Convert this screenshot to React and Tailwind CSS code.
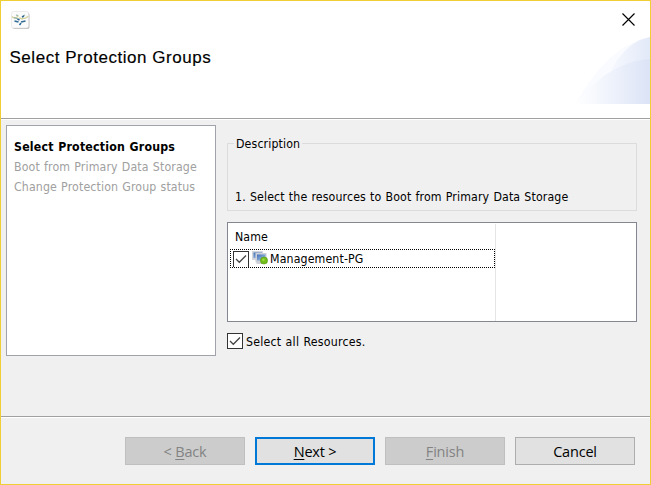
const TAHOMA =
  "font-['DejaVu_Sans_Condensed','DejaVu_Sans',sans-serif] [font-stretch:condensed] text-[12.25px] leading-5 tracking-[0.13px] [word-spacing:0.5px] whitespace-nowrap";

function AppIcon() {
  return (
    <svg width="19" height="19" viewBox="0 0 19 19" className="block">
      <rect x="1.5" y="1.5" width="17" height="16.5" rx="2.5" fill="#b9b9b9" />
      <rect x="0.5" y="0.5" width="17" height="16.5" rx="2" fill="#fbfbfc" stroke="#e4e4e4" strokeWidth="0.7" />
      <path d="M1 5.5 C3 8 6 7 7.5 4.5 M8 7 L12 8 M11 7 C13 8 16 7 17 5" fill="none" stroke="#d5d3a0" strokeWidth="1.4" />
      <path d="M3 6.5 L7 8 M5 4 L7 4.5 M12 5 L14 4" fill="none" stroke="#8fb0a8" strokeWidth="1.2" />
      <path d="M3.5 10 L7.5 11 M10 11 L14.5 10 M8.5 14 L10 12 M6.5 8 L8.5 9 M11 6 L13 5" fill="none" stroke="#2f6b94" strokeWidth="1.6" />
    </svg>
  );
}

function HeaderArt() {
  return (
    <svg width="74" height="67" viewBox="0 0 74 67" className="block">
      <defs>
        <linearGradient id="low" x1="0" x2="1">
          <stop offset="0" stopColor="#ffffff" />
          <stop offset="0.5" stopColor="#eef2fb" />
          <stop offset="1" stopColor="#dbe3f6" />
        </linearGradient>
        <linearGradient id="mid" x1="0" x2="1">
          <stop offset="0" stopColor="#f7f9fe" />
          <stop offset="1" stopColor="#e2e9f8" />
        </linearGradient>
      </defs>
      <path d="M0 67 C17 35 42 6 74 0 V67Z" fill="#fafbfe" />
      <path d="M33 38 C42 19 54 4 74 0 V40Z" fill="url(#mid)" />
      <path d="M0 67 C20 40 45 24 74 22 V67Z" fill="url(#low)" />
    </svg>
  );
}

function Check({ className = "" }) {
  return (
    <span className={`block w-4 shrink-0 overflow-hidden border border-[#333] bg-white ${className}`}>
      <svg width="14" height="14" viewBox="0 0 14 14" className="block">
        <path d="M2 7 L5.3 10.3 L12 3.5" fill="none" stroke="#444" strokeWidth="1.3" />
      </svg>
    </span>
  );
}

function GroupIcon() {
  return (
    <svg width="16" height="16" viewBox="0 0 16 16" className="block shrink-0">
      <defs>
        <linearGradient id="screen" x1="0" y1="0" x2="1" y2="1">
          <stop offset="0" stopColor="#3f70b6" />
          <stop offset="1" stopColor="#b3cdee" />
        </linearGradient>
      </defs>
      <rect x="0" y="1" width="11" height="9" fill="#d2d5da" />
      <rect x="1.5" y="2.5" width="8.5" height="5.5" fill="url(#screen)" />
      <rect x="3.5" y="3" width="11" height="9.5" fill="#cdd0d6" />
      <rect x="5" y="4.5" width="8.5" height="6" fill="url(#screen)" />
      <path d="M4.5 13 H11" stroke="#c2c6cc" strokeWidth="1.5" />
      <circle cx="12" cy="10.5" r="3.6" fill="#72bd17" stroke="#529512" strokeWidth="0.6" />
      <circle cx="11.4" cy="9.8" r="1.3" fill="#9ad944" />
    </svg>
  );
}

function Button({ className, children }) {
  return (
    <button
      className={`flex h-7 w-[120px] items-center justify-center pt-px font-['Open_Sans','Noto_Sans',sans-serif] text-[14.5px] leading-5 tracking-[-0.2px] whitespace-pre ${className}`}
    >
      {children}
    </button>
  );
}

function Key({ children }) {
  return <span className="underline decoration-1 underline-offset-2">{children}</span>;
}

const DISABLED = "border border-[#bfbfbf] bg-[#ccc] text-[#838383]";

export default function App() {
  return (
    <div className="flex h-[485px] w-[651px] flex-col border border-[#f0cf35] bg-[#f0f0f0] text-black">
      <header className="flex h-[118px] shrink-0 justify-between border-b border-[#a0a0a0] bg-white">
        <div className="pt-2.5 pl-2.5">
          <AppIcon />
          <h1 className="-ml-[1.5px] mt-[18px] font-['Liberation_Sans',sans-serif] text-[17px] leading-5 tracking-[0.53px] whitespace-nowrap [-webkit-text-stroke:0.15px_black]">
            Select Protection Groups
          </h1>
        </div>
        <div className="flex flex-col items-end">
          <svg width="13" height="13" viewBox="0 0 13 13" className="mt-[11.5px] mr-[15px] block">
            <path d="M0.5 0.5 L12.5 12.5 M12.5 0.5 L0.5 12.5" stroke="#000" strokeWidth="1.15" />
          </svg>
          <div className="mt-[11.5px]">
            <HeaderArt />
          </div>
        </div>
      </header>

      <main className="flex h-[298px] shrink-0 gap-[11px] border-t border-b border-t-white border-b-[#a0a0a0] pt-[5px] pr-[13px] pl-[5px]">
        <nav className={`h-[231px] w-[210px] shrink-0 border border-[#a0a3aa] bg-white pt-[11px] pl-[7px] text-[#a0a0a0] ${TAHOMA}`}>
          <div className="font-bold tracking-[0.2px] text-black">Select Protection Groups</div>
          <div>Boot from Primary Data Storage</div>
          <div>Change Protection Group status</div>
        </nav>

        <section className={`w-[410px] shrink-0 ${TAHOMA}`}>
          <fieldset className="mt-[7px] h-[79px] border border-[#dcdcdc] pr-2 pl-[7px]">
            <legend className="-ml-px px-0.5 pt-0.5">Description</legend>
            <p className="mt-[33px]">1. Select the resources to Boot from Primary Data Storage</p>
          </fieldset>

          <div className="mt-[11px] flex h-[100px] border border-[#828790] bg-white">
            <div className="mt-px w-[268px] border-r border-[#e5e5e5] pl-0.5">
              <div className="h-[25px] pt-[3px] pl-[5px]">Name</div>
              <div className="flex h-[19px] w-[265px] items-start border border-dotted border-black pt-px pl-0.5">
                <Check className="h-4 border-b-0" />
                <div className="-mt-px ml-[3px]">
                  <GroupIcon />
                </div>
                <span className="-mt-0.5 ml-0.5">Management-PG</span>
              </div>
            </div>
          </div>

          <label className="mt-[9px] flex items-center gap-[3px]">
            <Check className="h-4" />
            <span className="pt-0.5 leading-[18px] tracking-[0.23px]">Select all Resources.</span>
          </label>
        </section>
      </main>

      <footer className="flex flex-1 justify-end gap-2.5 border-t border-white pt-[19px] pr-[15px]">
        <Button className={DISABLED}>
          {"< "}
          <Key>B</Key>ack
        </Button>
        <Button className="border-2 border-[#0078d7] bg-[#e1e1e1]">
          <Key>N</Key>
          {"ext >"}
        </Button>
        <Button className={DISABLED}>
          <Key>F</Key>inish
        </Button>
        <Button className="border border-[#adadad] bg-[#e1e1e1]">Cancel</Button>
      </footer>
    </div>
  );
}
